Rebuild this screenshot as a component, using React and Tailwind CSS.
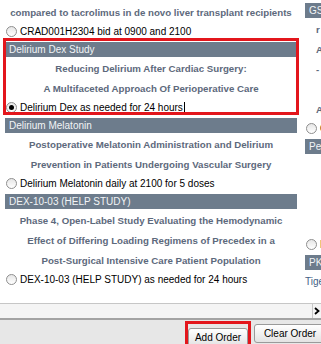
import React from "react";

const title = "text-center font-bold text-[9.7px] leading-[20px] text-[#5d697c] whitespace-nowrap";
const header = "h-[15px] bg-[#6d7c8c] text-[#f2f4f6] text-[10px] leading-[15px] pl-[4px] whitespace-nowrap overflow-hidden";

function Radio({ checked }) {
  return (
    <span className="w-[11px] h-[11px] shrink-0 rounded-full border border-[#8e8e8e] bg-gradient-to-b from-[#e6e6e6] to-white flex items-center justify-center">
      {checked && <span className="w-[5px] h-[5px] rounded-full bg-black" />}
    </span>
  );
}

function Option({ label, checked, caret }) {
  return (
    <div className="h-[16px] flex items-center gap-[3px] pl-[1px] text-[10px] text-black whitespace-nowrap">
      <Radio checked={checked} />
      <span>{label}</span>
      {caret && <span className="w-px h-[11px] bg-black -ml-[2px]" />}
    </div>
  );
}

function Section({ name, lines, option, checked, caret, highlight }) {
  return (
    <div className="relative pb-[3px]">
      <div className={header}>{name}</div>
      <div className="pt-[2px]">
        {lines.map((l) => (
          <div key={l} className={title}>{l}</div>
        ))}
      </div>
      <Option label={option} checked={checked} caret={caret} />
      {highlight && (
        <div className="absolute -left-[2px] -right-[2px] -top-[4px] bottom-[3px] border-[3px] border-[#e3161c] pointer-events-none" />
      )}
    </div>
  );
}

function SideSection({ name, lines, option }) {
  return (
    <div className="pb-[3px]">
      <div className={header}>{name}</div>
      <div className="pt-[2px]">
        {lines.map((l, i) => (
          <div key={i} className="font-bold text-[9.7px] leading-[20px] text-[#5d697c] whitespace-nowrap pl-[11px] h-[20px]">{l}</div>
        ))}
      </div>
      {option && <Option label={option} />}
    </div>
  );
}

export default function App() {
  return (
    <div className="w-[321px] h-[344px] flex flex-col overflow-hidden bg-white" style={{ fontFamily: '"Liberation Sans", Arial, sans-serif' }}>
      <div className="h-[303px] shrink-0 overflow-hidden flex pt-[3px]">
        <div className="ml-[5px] w-[292px] shrink-0">
          <div className={title}>compared to tacrolimus in de novo liver transplant recipients</div>
          <Option label="CRAD001H2304 bid at 0900 and 2100" />
          <div className="h-[3px]" />
          <Section
            name="Delirium Dex Study"
            lines={["Reducing Delirium After Cardiac Surgery:", "A Multifaceted Approach Of Perioperative Care"]}
            option="Delirium Dex as needed for 24 hours"
            checked
            caret
            highlight
          />
          <Section
            name="Delirium Melatonin"
            lines={["Postoperative Melatonin Administration and Delirium", "Prevention in Patients Undergoing Vascular Surgery"]}
            option="Delirium Melatonin daily at 2100 for 5 doses"
          />
          <Section
            name="DEX-10-03 (HELP STUDY)"
            lines={[
              "Phase 4, Open-Label Study Evaluating the Hemodynamic",
              "Effect of Differing Loading Regimens of Precedex in a",
              "Post-Surgical Intensive Care Patient Population",
            ]}
            option="DEX-10-03 (HELP STUDY) as needed for 24 hours"
          />
        </div>
        <div className="ml-[8px] w-[290px] shrink-0">
          <SideSection name="GS" lines={["r", "A", "-", "", "A"]} option="GS" />
          <SideSection name="Pediatric" lines={["", "", "", ""]} option="Pe" />
          <div className={header}>PK</div>
          <div className="pt-[2px] text-[10px] leading-[20px] text-[#3f5f86] whitespace-nowrap">Tigecycline</div>
        </div>
      </div>
      <div className="h-[15px] shrink-0 border-t border-[#c6c6c6] bg-[#f4f4f4] flex justify-end">
        <div className="w-[9px] border-l border-[#c6c6c6] flex items-center justify-center">
          <svg width="6" height="8" viewBox="0 0 6 8">
            <path d="M1 1 L4.5 4 L1 7" fill="none" stroke="#000" strokeWidth="1.8" />
          </svg>
        </div>
      </div>
      <div className="flex-1 border-t-2 border-[#a3a3a3] bg-[#e7e7e7] flex items-start gap-[3px] pl-[185px] pt-[1px]">
        <div className="border-[3px] border-[#e3161c] shrink-0">
          <button className="w-[60px] h-[19px] rounded-[3px] border border-[#9a9a9a] bg-gradient-to-b from-white to-[#e3e3e3] text-[10px] text-black">Add Order</button>
        </div>
        <button className="mt-[3px] w-[72px] h-[19px] shrink-0 rounded-[3px] border border-[#9a9a9a] bg-gradient-to-b from-white to-[#e3e3e3] text-[10px] text-black">Clear Order</button>
      </div>
    </div>
  );
}
